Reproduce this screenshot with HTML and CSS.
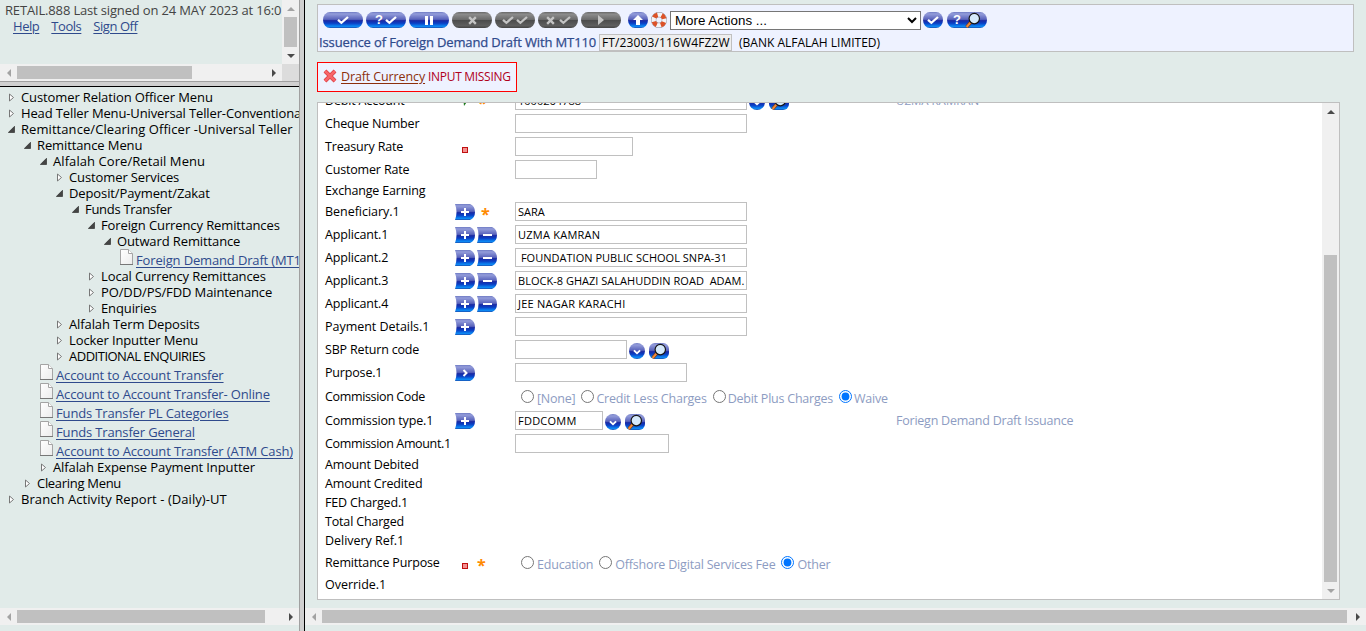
FILE: index.html
```html
<!DOCTYPE html>
<html lang="en">
<head>
<meta charset="utf-8">
<title>Issuence of Foreign Demand Draft</title>
<link rel="stylesheet" href="styles.css">
</head>
<body>
<svg class="defs" width="0" height="0">
  <defs>
    <linearGradient id="blue" x1="0" y1="0" x2="0" y2="1">
      <stop offset="0" stop-color="#6f7bc4"/><stop offset=".12" stop-color="#939cda"/><stop offset=".46" stop-color="#5963bb"/>
      <stop offset=".54" stop-color="#1a2aa4"/><stop offset=".7" stop-color="#0a3fc4"/><stop offset=".9" stop-color="#0c8af6"/><stop offset="1" stop-color="#1a50b0"/>
    </linearGradient>
    <linearGradient id="paper" x1="0" y1="0" x2="1" y2="1"><stop offset="0" stop-color="#fff"/><stop offset="1" stop-color="#ececec"/></linearGradient>
  </defs>
  <symbol id="closed" viewBox="0 0 7 9"><path d="M1.5 1v7l4-3.5z" fill="#fff" stroke="#777"/></symbol>
  <symbol id="open" viewBox="0 0 7 7"><path d="M6.5.3v6.2H.3z" fill="#444" stroke="#222" stroke-width=".6"/></symbol>
  <symbol id="doc" viewBox="0 0 13 16"><path d="M.5.5h8l4 4v11H.5z" fill="url(#paper)" stroke="#a4a4a4"/><path d="M8.5.5v4h4" fill="#fff" stroke="#a4a4a4"/><path d="M0 15.5h13" stroke="#777"/></symbol>
  <symbol id="plus" viewBox="0 0 20 16"><path d="M0 0h15q5 2 5 8t-5 8H0q3-8 0-16z" fill="url(#blue)"/><path d="M6 8h8M10 4v8" stroke="#fff" stroke-width="2"/></symbol>
  <symbol id="minus" viewBox="0 0 20 16"><path d="M0 0h15q5 2 5 8t-5 8H0q3-8 0-16z" fill="url(#blue)"/><path d="M6 8h9" stroke="#fff" stroke-width="2"/></symbol>
  <symbol id="expand" viewBox="0 0 20 16"><path d="M0 0h15q5 2 5 8t-5 8H0q3-8 0-16z" fill="url(#blue)"/><path d="M8.5 5l3 3-3 3" fill="none" stroke="#fff" stroke-width="2"/></symbol>
  <symbol id="drop" viewBox="0 0 16 16"><circle cx="8" cy="8" r="8" fill="url(#blue)"/><path d="M4.9 7.4L8 10.2l3.1-2.8" fill="none" stroke="#fff" stroke-width="1.9"/></symbol>
  <symbol id="glass" viewBox="0 0 16 16"><path d="M1.6 15l4.2-4.8" stroke="#7a3a10" stroke-width="3.4"/><path d="M1.6 15l4.2-4.8" stroke="#f08a3c" stroke-width="2"/><circle cx="9.3" cy="6.6" r="5.2" fill="#d5e9fb" stroke="#161616" stroke-width="1.2"/></symbol>
  <symbol id="find" viewBox="0 0 20 16"><rect width="20" height="16" rx="6" fill="url(#blue)"/><use href="#glass" x="2" y="0" width="16" height="16"/></symbol>
  <symbol id="tick" viewBox="0 0 12 10"><path d="M1 4.8l3.4 3L11 2" fill="none" stroke="currentColor" stroke-width="2.3"/></symbol>
  <symbol id="cross" viewBox="0 0 10 10"><path d="M1.3 1.3l7.4 7.4M8.7 1.3L1.3 8.7" stroke="currentColor" stroke-width="2.6"/></symbol>
</svg>

<div class="desktop">
  <aside class="side">
    <header class="banner">
      <div class="banner-view">
        <div class="signed">RETAIL.888 Last signed on 24 MAY 2023 at 16:0</div>
        <nav class="links"><a>Help</a><a>Tools</a><a>Sign Off</a></nav>
      </div>
      <div class="vbar"><i class="arr up dim"></i><b class="banner-vthumb"></b><i class="arr down end"></i></div>
      <div class="hbar"><i class="arr left dim"></i><b class="banner-hthumb"></b><i class="arr right end"></i></div>
      <div class="corner"></div>
    </header>
    <div class="hsplit"></div>
    <ul class="tree">
      <li class="l0"><svg class="c"><use href="#closed"/></svg>Customer Relation Officer Menu</li>
      <li class="l0 head"><svg class="c"><use href="#closed"/></svg>Head Teller Menu-Universal Teller-Conventiona</li>
      <li class="l0 wide"><svg class="o"><use href="#open"/></svg>Remittance/Clearing Officer -Universal Teller</li>
      <li class="l1"><svg class="o"><use href="#open"/></svg>Remittance Menu</li>
      <li class="l2 wide"><svg class="o"><use href="#open"/></svg>Alfalah Core/Retail Menu</li>
      <li class="l3"><svg class="c"><use href="#closed"/></svg>Customer Services</li>
      <li class="l3"><svg class="o"><use href="#open"/></svg>Deposit/Payment/Zakat</li>
      <li class="l4 snug"><svg class="o"><use href="#open"/></svg>Funds Transfer</li>
      <li class="l5"><svg class="o"><use href="#open"/></svg>Foreign Currency Remittances</li>
      <li class="l6"><svg class="o"><use href="#open"/></svg>Outward Remittance</li>
      <li class="l7 leaf"><svg><use href="#doc"/></svg><a>Foreign Demand Draft (MT1</a></li>
      <li class="l5"><svg class="c"><use href="#closed"/></svg>Local Currency Remittances</li>
      <li class="l5"><svg class="c"><use href="#closed"/></svg>PO/DD/PS/FDD Maintenance</li>
      <li class="l5"><svg class="c"><use href="#closed"/></svg>Enquiries</li>
      <li class="l3"><svg class="c"><use href="#closed"/></svg>Alfalah Term Deposits</li>
      <li class="l3"><svg class="c"><use href="#closed"/></svg>Locker Inputter Menu</li>
      <li class="l3 caps"><svg class="c"><use href="#closed"/></svg>ADDITIONAL ENQUIRIES</li>
      <li class="l2 leaf"><svg><use href="#doc"/></svg><a>Account to Account Transfer</a></li>
      <li class="l2 leaf"><svg><use href="#doc"/></svg><a>Account to Account Transfer- Online</a></li>
      <li class="l2 leaf"><svg><use href="#doc"/></svg><a>Funds Transfer PL Categories</a></li>
      <li class="l2 leaf"><svg><use href="#doc"/></svg><a>Funds Transfer General</a></li>
      <li class="l2 leaf"><svg><use href="#doc"/></svg><a>Account to Account Transfer (ATM Cash)</a></li>
      <li class="l2"><svg class="c"><use href="#closed"/></svg>Alfalah Expense Payment Inputter</li>
      <li class="l1 snug"><svg class="c"><use href="#closed"/></svg>Clearing Menu</li>
      <li class="l0 wide"><svg class="c"><use href="#closed"/></svg>Branch Activity Report - (Daily)-UT</li>
    </ul>
    <div class="hbar"><i class="arr left dim"></i><b class="side-thumb"></b><i class="arr right end"></i></div>
  </aside>
  <div class="vsplit"></div>
  <main class="main">
    <section class="toolbar">
      <div class="buttons">
        <span class="pill"><svg class="tick"><use href="#tick"/></svg></span>
        <span class="pill"><em>?</em><svg class="tick"><use href="#tick"/></svg></span>
        <span class="pill"><svg width="8" height="9"><path d="M1.5 0v9M6.5 0v9" stroke="#fff" stroke-width="3"/></svg></span>
        <span class="pill off"><svg class="cross"><use href="#cross"/></svg></span>
        <span class="pill off"><svg class="tick"><use href="#tick"/></svg><svg class="tick"><use href="#tick"/></svg></span>
        <span class="pill off spaced"><svg class="cross"><use href="#cross"/></svg><svg class="tick"><use href="#tick"/></svg></span>
        <span class="pill off"><svg width="6" height="10"><path d="M0 0v10l6-5z" fill="#c4c4c4"/></svg></span>
        <span class="pill small first"><svg width="10" height="10"><path d="M5 0l5 5H7v5H3V5H0z" fill="#fff"/></svg></span>
        <svg class="ring" viewBox="0 0 16 16"><circle cx="8" cy="8" r="5.4" fill="none" stroke="#8a8a98" stroke-width="5.2"/><circle cx="8" cy="8" r="5.4" fill="none" stroke="#f4f4f6" stroke-width="4.4"/><circle cx="8" cy="8" r="5.4" fill="none" stroke="#dc5228" stroke-width="4.6" stroke-dasharray="4.24 4.24" stroke-dashoffset="-2.12"/></svg>
        <select class="more"><option>More Actions ...</option></select>
        <span class="pill small"><svg class="tick"><use href="#tick"/></svg></span>
        <span class="pill search"><em>?</em><svg width="16" height="16"><use href="#glass"/></svg></span>
      </div>
      <div class="heading"><span class="title">Issuence of Foreign Demand Draft With MT110</span><span class="ref">FT/23003/116W4FZ2W</span><span class="bank">(BANK ALFALAH LIMITED)</span></div>
    </section>
    <section class="error">
      <svg width="14" height="14" viewBox="0 0 14 14"><path d="M2 2l10 10M12 2L2 12" stroke="#d63c40" stroke-width="4"/><path d="M2 2l10 10M12 2L2 12" stroke="#f86468" stroke-width="2.6"/></svg>
      <a>Draft Currency</a><span>INPUT MISSING</span>
    </section>
    <section class="panel">
      <div class="form">
        <div class="row"><label>Debit Account</label><div class="marks"><svg class="go" width="6" height="10"><path d="M0 0l6 3-5 7z" fill="#1c7a1c"/></svg><span class="star near">*</span></div><div class="field"><span class="box w232">1000264788</span><svg class="drop"><use href="#drop"/></svg><svg class="find"><use href="#find"/></svg></div><div class="desc small-desc">UZMA KAMRAN</div></div>
        <div class="row"><label>Cheque Number</label><div class="marks"></div><div class="field"><span class="box w232"></span></div></div>
        <div class="row"><label>Treasury Rate</label><div class="marks"><i class="hot"></i></div><div class="field"><span class="box w118"></span></div></div>
        <div class="row"><label>Customer Rate</label><div class="marks"></div><div class="field"><span class="box w82"></span></div></div>
        <div class="row thin"><label>Exchange Earning</label></div>
        <div class="row"><label class="open">Beneficiary.1</label><div class="marks"><svg><use href="#plus"/></svg><span class="star">*</span></div><div class="field"><span class="box w232">SARA</span></div></div>
        <div class="row"><label>Applicant.1</label><div class="marks"><svg><use href="#plus"/></svg><svg><use href="#minus"/></svg></div><div class="field"><span class="box w232 loose">UZMA KAMRAN</span></div></div>
        <div class="row"><label>Applicant.2</label><div class="marks"><svg><use href="#plus"/></svg><svg><use href="#minus"/></svg></div><div class="field"><span class="box w232"> FOUNDATION PUBLIC SCHOOL SNPA-31</span></div></div>
        <div class="row"><label>Applicant.3</label><div class="marks"><svg><use href="#plus"/></svg><svg><use href="#minus"/></svg></div><div class="field"><span class="box w232">BLOCK-8 GHAZI SALAHUDDIN ROAD  ADAM.</span></div></div>
        <div class="row"><label>Applicant.4</label><div class="marks"><svg><use href="#plus"/></svg><svg><use href="#minus"/></svg></div><div class="field"><span class="box w232 loose">JEE NAGAR KARACHI</span></div></div>
        <div class="row"><label class="open">Payment Details.1</label><div class="marks"><svg><use href="#plus"/></svg></div><div class="field"><span class="box w232"></span></div></div>
        <div class="row"><label>SBP Return code</label><div class="marks"></div><div class="field"><span class="box w112"></span><svg class="drop"><use href="#drop"/></svg><svg class="find"><use href="#find"/></svg></div></div>
        <div class="row"><label>Purpose.1</label><div class="marks"><svg><use href="#expand"/></svg></div><div class="field"><span class="box w172"></span></div></div>
        <div class="row tall"><label class="tight">Commission Code</label><div class="marks"></div><div class="radios"><input type="radio" name="cc"><span class="none">[None]</span><input type="radio" name="cc"><span>Credit Less Charges</span><input type="radio" name="cc"><span>Debit Plus Charges</span><input type="radio" name="cc" checked><span>Waive</span></div></div>
        <div class="row"><label>Commission type.1</label><div class="marks"><svg><use href="#plus"/></svg></div><div class="field"><span class="box w88 loose">FDDCOMM</span><svg class="drop"><use href="#drop"/></svg><svg class="find"><use href="#find"/></svg></div><div class="desc">Foriegn Demand Draft Issuance</div></div>
        <div class="row"><label class="tight">Commission Amount.1</label><div class="marks"></div><div class="field"><span class="box w154"></span></div></div>
        <div class="row thin"><label>Amount Debited</label></div>
        <div class="row thin"><label>Amount Credited</label></div>
        <div class="row thin"><label>FED Charged.1</label></div>
        <div class="row thin"><label>Total Charged</label></div>
        <div class="row thin"><label class="open">Delivery Ref.1</label></div>
        <div class="row tall"><label>Remittance Purpose</label><div class="marks"><i class="hot"></i><span class="star near">*</span></div><div class="radios second"><input type="radio" name="rp"><span>Education</span><input type="radio" name="rp"><span>Offshore Digital Services Fee</span><input type="radio" name="rp" checked><span>Other</span></div></div>
        <div class="row thin"><label class="open">Override.1</label></div>
      </div>
      <div class="vbar"><i class="arr up"></i><b class="panel-thumb"></b><i class="arr down dim end"></i></div>
    </section>
    <div class="hbar"><i class="arr left dim"></i><b class="main-thumb"></b><i class="arr right end"></i></div>
  </main>
</div>
</body>
</html>
```
FILE: styles.css
```css
* { box-sizing: border-box; }
body {
  margin: 0;
  height: 631px;
  overflow: hidden;
  background: #e1ebe9;
  font: 13px "Open Sans", "Noto Sans", sans-serif;
  color: #000;
}
svg { display: block; flex: none; }
.defs { position: absolute; }
.desktop { display: grid; grid-template-columns: 299px 6px 1fr; height: 631px; }
.vsplit { border-left: 1px solid #a0a0a0; border-right: 1px solid #000; background: #d0d0d0; }
.hsplit { flex: none; height: 6px; border-top: 1px solid #a0a0a0; border-bottom: 1px solid #000; background: #d0d0d0; }

/* scrollbars */
.vbar, .hbar { display: flex; align-items: center; background: #f0f0f0; flex: none; }
.vbar { flex-direction: column; width: 17px; }
.hbar { height: 17px; }
.vbar b, .hbar b { background: #c0c0c0; flex: none; }
.vbar b { width: 13px; }
.hbar b { height: 13px; }
.arr { width: 17px; height: 17px; flex: none; display: grid; place-items: center; color: #4a4a4a; }
.arr.dim { color: #a3a3a3; }
.arr::before { content: ""; border: 4px solid transparent; }
.arr.up::before { border-bottom-color: currentColor; border-top: 0; }
.arr.down::before { border-top-color: currentColor; border-bottom: 0; }
.arr.left::before { border-right-color: currentColor; border-left: 0; }
.arr.right::before { border-left-color: currentColor; border-right: 0; }
.vbar .end { margin-top: auto; }
.hbar .end { margin-left: auto; }
.banner-vthumb { height: 30px; }
.banner-hthumb { width: 175px; }
.side-thumb { width: 248px; }
.main-thumb { width: 1025px; }
.panel-thumb { height: 327px; margin-top: 135px; }

/* left side */
.side { display: flex; flex-direction: column; min-width: 0; padding-bottom: 6px; }
.banner { display: grid; grid-template-columns: 282px 17px; grid-template-rows: 64px 17px; flex: none; }
.banner-view { padding: 2px 0 0 5px; color: #444; line-height: 16px; white-space: nowrap; letter-spacing: -.16px; }
.links { display: flex; gap: 12px; padding-left: 8px; letter-spacing: -.45px; }
a { color: #2f4a8c; text-decoration: underline; text-underline-offset: 2px; }
.corner { background: #dcdcdc; }
.tree { flex: 1; margin: 0; padding: 2px 0 0; list-style: none; white-space: nowrap; letter-spacing: -.11px; }
.tree li { display: flex; align-items: center; height: 16px; line-height: 16px; }
.tree svg { margin-right: 6px; }
.tree svg.c { width: 7px; height: 9px; }
.tree svg.o { width: 7px; height: 7px; }
.tree .wide { letter-spacing: .07px; }
.tree .snug { letter-spacing: -.3px; }
.tree .head { letter-spacing: -.13px; }
.tree .caps { letter-spacing: -.5px; }
.tree .leaf { height: 19px; align-items: flex-start; letter-spacing: -.15px; }
.tree .leaf svg { width: 13px; height: 16px; margin-right: 3px; }
.tree .leaf a { padding-top: 3px; }
.l0 { padding-left: 8px; }
.l1 { padding-left: 24px; }
.l2 { padding-left: 40px; }
.l3 { padding-left: 56px; }
.l4 { padding-left: 72px; }
.l5 { padding-left: 88px; }
.l6 { padding-left: 104px; }
.l7 { padding-left: 120px; }

/* right side */
.main { display: flex; flex-direction: column; min-width: 0; padding: 4px 0 6px; }
.toolbar { margin-left: 12px; width: 1037px; height: 48px; border: 1px solid #bfbfbf; background: #eef2ff; }
.buttons { display: flex; align-items: center; height: 20px; margin-top: 5px; padding-left: 5px; gap: 3px; }
.pill { display: flex; align-items: center; justify-content: center; gap: 2px; width: 40px; height: 16px; border-radius: 7px / 8px; color: #fff;
  background: linear-gradient(#6f7bc4, #939cda 12%, #5963bb 46%, #1a2aa4 54%, #0a3fc4 70%, #0c8af6 90%, #1a50b0); }
.pill.off { color: #c4c4c4; background: linear-gradient(#686868, #8c8c8c 14%, #6a6a6a 48%, #4c4c4c 52%, #5e5e5e 85%, #444); }
.pill.small { width: 20px; }
.pill.first { margin-left: 4px; }
.pill.search { margin-left: 1px; gap: 4px; }
.pill.spaced { gap: 4px; }
.pill em { font: bold 13px/16px "Liberation Sans", sans-serif; }
.tick { width: 12px; height: 10px; }
.cross { width: 9px; height: 9px; }
.ring { width: 16px; height: 16px; }
.more { width: 251px; height: 19px; margin-right: -1px; padding: 0; font: 13.33px "Liberation Sans", sans-serif; color: #000; background: #fff; border: 1px solid #767676; border-radius: 0; }
.heading { display: flex; align-items: center; height: 17px; margin-top: 4px; padding-left: 1px; white-space: nowrap; }
.title { width: 280px; color: #2f4a8c; line-height: 17px; padding-bottom: 1px; letter-spacing: -.13px; -webkit-text-stroke: .25px #2f4a8c; }
.ref { width: 133px; height: 17px; padding-left: 2px; line-height: 15px; border: 1px solid #c0c0c0; background: #eee; font-size: 12px; letter-spacing: .13px; }
.bank { padding-left: 7px; font-size: 12px; }
.error { display: flex; align-items: center; flex: none; width: 200px; height: 30px; margin: 10px 0 0 12px; padding: 0 0 2px 5px; border: 1px solid #f00; background: #eef2ff; white-space: nowrap; color: #b0001c; font-size: 12px; letter-spacing: -.3px; }
.error a { width: 84px; margin: 0 3px 0 4px; color: #8c2f0c; font-size: 12.5px; letter-spacing: -.12px; }
.panel { display: flex; flex: none; width: 1023px; height: 498px; margin: 10px 0 8px 12px; border: 1px solid #bfbfbf; background: #fff; overflow: hidden; }
.form { flex: 1; margin-top: -14px; padding-left: 7px; font-size: 12.5px; letter-spacing: -.17px; }
.row { display: grid; grid-template-columns: 130px 60px 381px 1fr; height: 23px; align-items: center; white-space: nowrap; }
.row.thin { height: 19px; }
.row.tall { height: 25px; }
.row label { line-height: 19px; }
.row label.tight { letter-spacing: -.35px; }
.row label.open { letter-spacing: -.03px; }
.tall label { padding-bottom: 1px; }
.marks { display: flex; align-items: center; gap: 2px; height: 19px; }
.marks svg:not(.go) { width: 20px; height: 16px; margin-top: 1px; }
.marks .go { margin-left: 8px; }
.star { width: 8px; margin-left: 4px; color: #ff8a00; font: bold 16px/19px "Open Sans", sans-serif; padding-top: 5px; }
.star.near { margin-left: 7px; }
.hot { width: 6px; height: 6px; margin: 7px 0 0 7px; border: 1px solid #c01010; background: #f49090; }
.field { display: flex; align-items: center; }
.box { height: 19px; border: 1px solid #c0c0c0; padding-left: 2px; font-size: 11px; line-height: 17px; letter-spacing: .02px; white-space: pre; background: #fff; }
.box.loose { letter-spacing: .24px; }
.w232 { width: 232px; }
.w172 { width: 172px; }
.w154 { width: 154px; }
.w118 { width: 118px; }
.w112 { width: 112px; }
.w88 { width: 88px; }
.w82 { width: 82px; }
.drop { width: 16px; height: 16px; margin: 3px 0 0 2px; }
.find { width: 20px; height: 16px; margin: 3px 0 0 4px; }
.desc, .radios { color: #8d9cc2; }
.desc { letter-spacing: -.23px; }
.small-desc { font-size: 11.5px; letter-spacing: 0; }
.radios { display: flex; align-items: center; padding-left: 6px; letter-spacing: -.23px; }
.radios input { width: 13px; height: 13px; margin: 0 3px 0 0; flex: none; }
.radios span { margin: 0 6px 0 -1px; padding-top: 3px; }
.radios .none { margin-left: 0; }
.radios.second { letter-spacing: -.19px; }
.radios.second span { margin: 0 6px 0 0; }
```
